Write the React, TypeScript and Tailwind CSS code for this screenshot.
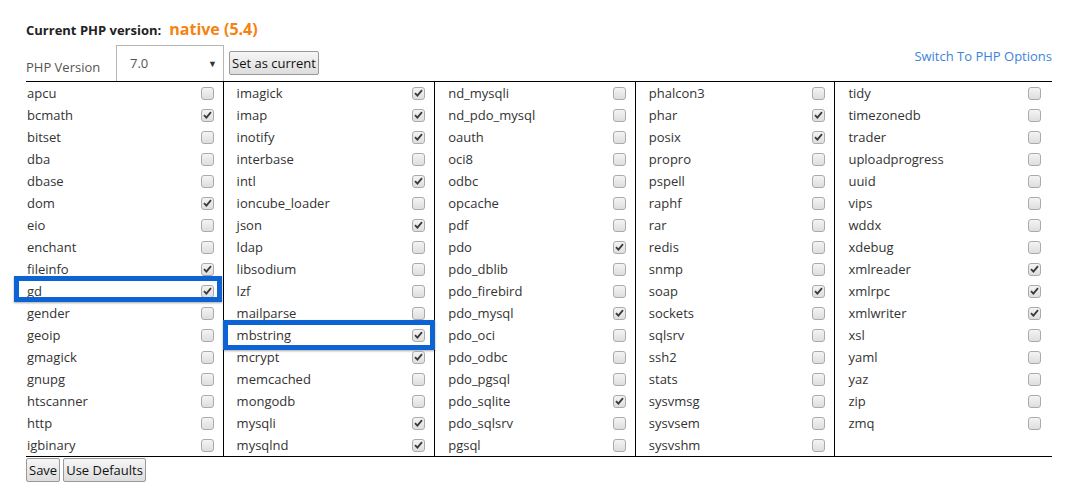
import React from "react";

type Item = [string, boolean];

const cols: { width: string; items: Item[] }[] = [
  {
    width: "w-[197px]",
    items: [
      ["apcu", false], ["bcmath", true], ["bitset", false], ["dba", false], ["dbase", false],
      ["dom", true], ["eio", false], ["enchant", false], ["fileinfo", true], ["gd", true],
      ["gender", false], ["geoip", false], ["gmagick", false], ["gnupg", false], ["htscanner", false],
      ["http", false], ["igbinary", false],
    ],
  },
  {
    width: "w-[212px]",
    items: [
      ["imagick", true], ["imap", true], ["inotify", true], ["interbase", false], ["intl", true],
      ["ioncube_loader", false], ["json", true], ["ldap", false], ["libsodium", false], ["lzf", false],
      ["mailparse", false], ["mbstring", true], ["mcrypt", true], ["memcached", false], ["mongodb", false],
      ["mysqli", true], ["mysqlnd", true],
    ],
  },
  {
    width: "w-[201px]",
    items: [
      ["nd_mysqli", false], ["nd_pdo_mysql", false], ["oauth", false], ["oci8", false], ["odbc", false],
      ["opcache", false], ["pdf", false], ["pdo", true], ["pdo_dblib", false], ["pdo_firebird", false],
      ["pdo_mysql", true], ["pdo_oci", false], ["pdo_odbc", false], ["pdo_pgsql", false], ["pdo_sqlite", true],
      ["pdo_sqlsrv", false], ["pgsql", false],
    ],
  },
  {
    width: "w-[200px]",
    items: [
      ["phalcon3", false], ["phar", true], ["posix", true], ["propro", false], ["pspell", false],
      ["raphf", false], ["rar", false], ["redis", false], ["snmp", false], ["soap", true],
      ["sockets", false], ["sqlsrv", false], ["ssh2", false], ["stats", false], ["sysvmsg", false],
      ["sysvsem", false], ["sysvshm", false],
    ],
  },
  {
    width: "w-[218px]",
    items: [
      ["tidy", false], ["timezonedb", false], ["trader", false], ["uploadprogress", false], ["uuid", false],
      ["vips", false], ["wddx", false], ["xdebug", false], ["xmlreader", true], ["xmlrpc", true],
      ["xmlwriter", true], ["xsl", false], ["yaml", false], ["yaz", false], ["zip", false],
      ["zmq", false],
    ],
  },
];

function Check({ checked }: { checked: boolean }) {
  return (
    <span className="flex h-[13px] w-[13px] items-center justify-center rounded-[3px] border border-[#ababab] bg-gradient-to-b from-[#f4f4f4] to-[#dedede]">
      {checked && (
        <svg width="9" height="8" viewBox="0 0 9 8">
          <path d="M1 4.2 L3.4 6.6 L8 1.2" fill="none" stroke="#3a3a3a" strokeWidth="1.8" />
        </svg>
      )}
    </span>
  );
}

export default function App() {
  return (
    <div
      className="min-h-[502px] w-[1078px] bg-white px-[26px] text-[13px] text-[#333]"
      style={{ fontFamily: '"Open Sans", "Noto Sans", sans-serif' }}
    >
      <div className="flex items-baseline pt-[19px] leading-[20px]">
        <span className="font-bold text-[#222]">Current PHP version:</span>
        <span className="ml-[8px] text-[16px] font-bold text-[#f7820f]">native (5.4)</span>
      </div>
      <div className="mt-[5px] flex h-[36px]">
        <span className="w-[90px] self-end pb-[4px] text-[#555]">PHP Version</span>
        <div className="flex w-[108px] items-center justify-between border border-b-0 border-[#b5b5b5] pl-[13px] pr-[6px] text-[#555]">
          <span>7.0</span>
          <span className="text-[9px] text-[#333]">▼</span>
        </div>
        <button className="ml-[5px] mt-[6px] h-[24px] self-start rounded-[2px] border border-[#999] bg-gradient-to-b from-[#f6f6f6] to-[#dddddd] px-[2px] leading-[20px] text-[#111]">
          Set as current
        </button>
        <span className="ml-auto mt-[2px] self-start text-[#3b84db]">Switch To PHP Options</span>
      </div>
      <div className="flex border-y border-black">
        {cols.map((col, ci) => (
          <div
            key={ci}
            className={`${col.width} ${ci > 0 ? "border-l border-black pl-[13px]" : "pl-[1px]"} ${ci === 4 ? "pr-[11px]" : "pr-[9px]"} flex flex-col`}
          >
            {col.items.map(([name, checked]) => (
              <div key={name} className="relative flex h-[22px] items-center justify-between">
                <span className="leading-[22px]">{name}</span>
                <Check checked={checked} />
                {name === "gd" && (
                  <span className="pointer-events-none absolute -left-[13px] -right-[8px] -top-[4px] bottom-[0px] border-[5px] border-[#0b63d4] shadow-[0_1px_2px_rgba(0,0,0,0.35)]" />
                )}
                {name === "mbstring" && (
                  <span className="pointer-events-none absolute -left-[14px] -right-[10px] -top-[4px] -bottom-[4px] border-[5px] border-[#0b63d4] shadow-[0_1px_2px_rgba(0,0,0,0.35)]" />
                )}
              </div>
            ))}
          </div>
        ))}
      </div>
      <div className="mt-[1px] flex gap-[3px]">
        <button className="h-[24px] rounded-[2px] border border-[#999] bg-gradient-to-b from-[#f6f6f6] to-[#dddddd] px-[2px] leading-[20px] text-[#111]">
          Save
        </button>
        <button className="h-[24px] rounded-[2px] border border-[#999] bg-gradient-to-b from-[#f6f6f6] to-[#dddddd] px-[2px] leading-[20px] text-[#111]">
          Use Defaults
        </button>
      </div>
    </div>
  );
}
